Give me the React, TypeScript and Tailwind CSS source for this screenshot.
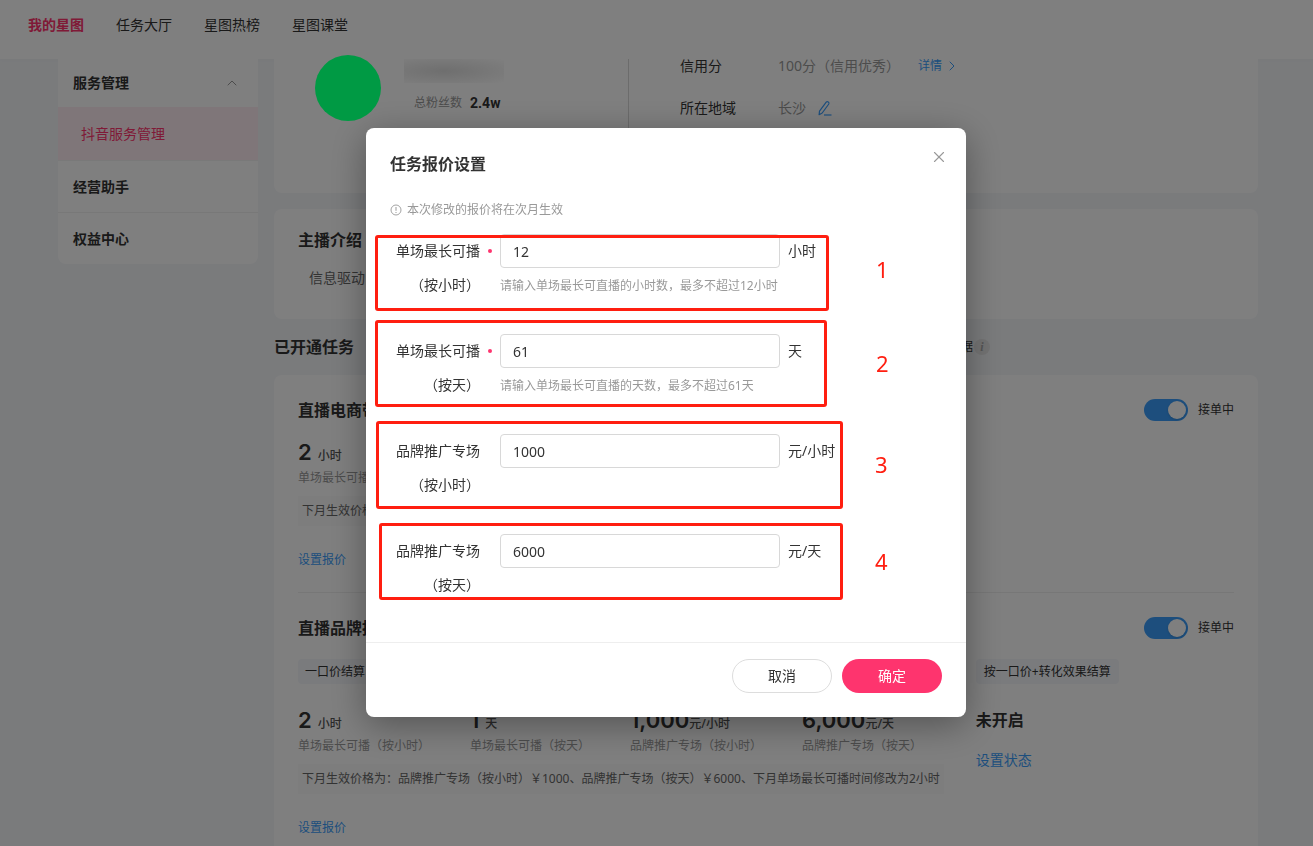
import React from 'react';
import { ChevronRight, ChevronUp, X } from 'lucide-react';

const navItems = ["我的星图", "任务大厅", "星图热榜", "星图课堂"];

const stats = [
  { value: "2", unit: "小时", label: "单场最长可播（按小时）", spaced: true },
  { value: "1", unit: "天", label: "单场最长可播（按天）", spaced: true },
  { value: "1,000", unit: "元/小时", label: "品牌推广专场（按小时）", spaced: false },
  { value: "6,000", unit: "元/天", label: "品牌推广专场（按天）", spaced: false },
];

const fields = [
  {
    id: "max-hours",
    label: "单场最长可播",
    sub: "（按小时）",
    required: true,
    value: "12",
    unit: "小时",
    hint: "请输入单场最长可直播的小时数，最多不超过12小时",
    mark: "-left-[15px] top-px w-[454px] h-[76px]",
    num: "left-[486px] top-[19px]",
  },
  {
    id: "max-days",
    label: "单场最长可播",
    sub: "（按天）",
    required: true,
    value: "61",
    unit: "天",
    hint: "请输入单场最长可直播的天数，最多不超过61天",
    mark: "-left-[15px] -top-[14px] w-[452px] h-[87px]",
    num: "left-[486px] top-[13px]",
  },
  {
    id: "price-hour",
    label: "品牌推广专场",
    sub: "（按小时）",
    required: false,
    value: "1000",
    unit: "元/小时",
    hint: "",
    mark: "-left-[14px] -top-[13px] w-[467px] h-[88px]",
    num: "left-[485px] top-[14px]",
  },
  {
    id: "price-day",
    label: "品牌推广专场",
    sub: "（按天）",
    required: false,
    value: "6000",
    unit: "元/天",
    hint: "",
    mark: "-left-[11px] -top-[11px] w-[464px] h-[77px]",
    num: "left-[485px] top-[11px]",
  },
];

function Stat({ value, unit, label, spaced }: { value: string; unit: string; label: string; spaced: boolean }) {
  return (
    <div>
      <div className={spaced ? "flex items-baseline gap-1.5 h-6 leading-6" : "flex items-baseline h-6 leading-6"}>
        <span className="font-[Inter] font-semibold text-[22px]">{value}</span>
        <span className="text-xs leading-6 font-medium text-[#555]">{unit}</span>
      </div>
      <p className="mt-1 text-xs leading-5 text-[#999]">{label}</p>
    </div>
  );
}

function Toggle({ id }: { id: string }) {
  return (
    <div className="flex items-center gap-2.5">
      <input
        id={id}
        type="checkbox"
        role="switch"
        defaultChecked
        className="relative appearance-none w-11 h-[22px] rounded-full bg-[#3a9dfa] before:absolute before:right-0.5 before:top-0.5 before:size-[18px] before:rounded-full before:bg-white before:shadow"
      />
      <label htmlFor={id} className="text-xs">接单中</label>
    </div>
  );
}

function Sidebar() {
  return (
    <aside className="w-[200px] shrink-0 self-start bg-white rounded-b-lg overflow-hidden text-sm">
      <div className="flex items-center justify-between h-12 pl-[15px] pr-[18px] font-bold">
        服务管理
        <ChevronUp className="w-4 h-4 text-[#999]" strokeWidth={1.5} />
      </div>
      <a href="#service" className="flex items-center h-[54px] pl-[23px] bg-[#ffedf2] text-[#fe346e] border-b border-[#f3f3f3]">抖音服务管理</a>
      <a href="#assistant" className="flex items-center h-[52px] pl-[15px] font-bold border-b border-[#f0f0f0]">经营助手</a>
      <a href="#rights" className="flex items-center h-[51px] pl-[15px] font-bold">权益中心</a>
    </aside>
  );
}

function Profile() {
  return (
    <section className="flex h-[134px] bg-white rounded-b-lg text-sm">
      <div className="flex w-[355px] border-r border-[#d8d8d8]">
        {/* avatar stays above the mask */}
        <div className="relative z-50 -mt-1 ml-[41px] size-[66px] rounded-full bg-[#009a44]" />
        <div className="ml-[23px]">
          <div className="w-[100px] h-6 bg-[radial-gradient(ellipse_at_40%_50%,#dedede_0%,#ededed_45%,#ffffff_100%)]" />
          <p className="flex items-center mt-2.5 ml-2.5 gap-2 text-xs text-[#999]">
            总粉丝数
            <span className="font-[Roboto] font-bold text-sm leading-5 text-[#333]">2.4w</span>
          </p>
        </div>
      </div>
      <dl className="grid grid-cols-[98px_auto] content-start ml-[51px] leading-[42px] -mt-3.5">
        <dt>信用分</dt>
        <dd className="flex items-center text-[#999]">
          100分（信用优秀）
          <a href="#detail" className="flex items-center gap-0.5 ml-[18px] text-xs leading-[42px] text-[#3a9dfa]">
            详情
            <ChevronRight className="w-4 h-4" strokeWidth={1.5} />
          </a>
        </dd>
        <dt>所在地域</dt>
        <dd className="flex items-center text-[#999]">
          长沙
          <button type="button" aria-label="编辑" className="ml-[11px] text-[#3a9dfa]">
            <svg className="w-4 h-4" viewBox="0 0 16 16" fill="none" stroke="currentColor" strokeWidth="1.2">
              <path d="M9.2 2.2a1.6 1.6 0 0 1 2.6 1.8L5.2 13l-3.1 1.7.4-3.6z" strokeLinejoin="round" />
              <path d="M7 15h7.5" />
            </svg>
          </button>
        </dd>
      </dl>
    </section>
  );
}

function Tasks() {
  return (
    <section className="bg-white rounded-t-lg px-6 pt-[23px] pb-12">
      <div className="pb-6 border-b border-[#efefef]">
        <div className="flex items-center justify-between h-6">
          <h3 className="text-base font-bold">直播电商带货</h3>
          <Toggle id="task-shop" />
        </div>
        <div className="flex mt-[18px]">
          <Stat {...stats[0]} label="单场最长可播" />
        </div>
        <p className="inline-block mt-2 px-1 bg-[#fafafa] text-xs leading-[30px] text-[#666]">下月生效价格为：</p>
        <div className="mt-[22px] leading-5">
          <a href="#quote-shop" className="text-xs text-[#3a9dfa]">设置报价</a>
        </div>
      </div>

      <div className="pt-[23px]">
        <div className="flex items-center justify-between h-6">
          <h3 className="text-base font-bold">直播品牌推广</h3>
          <Toggle id="task-brand" />
        </div>
        <div className="flex gap-8 mt-[18px]">
          <div>
            <span className="inline-block px-[7px] h-[25px] rounded bg-[#f5f7fb] text-xs leading-[25px]">一口价结算</span>
            <div className="flex gap-10 mt-6">
              {stats.map((stat) => (
                <Stat key={stat.label} {...stat} />
              ))}
            </div>
            <p className="mt-2 px-1 bg-[#fafafa] text-xs leading-[30px] text-[#666] whitespace-nowrap">
              下月生效价格为：品牌推广专场（按小时）￥1000、品牌推广专场（按天）￥6000、下月单场最长可播时间修改为2小时
            </p>
            <div className="mt-[22px] leading-5">
              <a href="#quote-brand" className="text-xs text-[#3a9dfa]">设置报价</a>
            </div>
          </div>
          <div>
            <span className="inline-block px-2 h-[25px] rounded bg-[#f5f7fb] text-xs leading-[25px] whitespace-nowrap">按一口价+转化效果结算</span>
            <p className="mt-6 text-base leading-6 font-bold">未开启</p>
            <a href="#status" className="block mt-[18px] text-sm leading-5 text-[#3a9dfa]">设置状态</a>
          </div>
        </div>
      </div>
    </section>
  );
}

function QuoteDialog() {
  return (
    <div className="fixed inset-0 z-40 flex items-start justify-center pt-32 pl-[19px] bg-black/50">
      <div role="dialog" aria-labelledby="quote-title" className="w-[600px] bg-white rounded-lg shadow-[0_8px_36px_rgba(0,0,0,0.35)]">
        <div className="px-6 pt-6 pb-2">
          <div className="flex items-start justify-between h-6">
            <h2 id="quote-title" className="text-base leading-6 font-bold">任务报价设置</h2>
            <button type="button" aria-label="关闭" className="-mr-1.5 -mt-1 text-[#999]">
              <X className="w-[18px] h-[18px]" strokeWidth={1.5} />
            </button>
          </div>
          <p className="flex items-center gap-[5px] mt-6 text-xs leading-5 text-[#999]">
            <svg className="w-3 h-3" viewBox="0 0 12 12" fill="none" stroke="currentColor">
              <circle cx="6" cy="6" r="5" strokeWidth="0.9" />
              <path d="M6 3v3.8M6 8v1" />
            </svg>
            本次修改的报价将在次月生效
          </p>

          <form className="mt-3.5 text-sm">
            {fields.map((field, i) => (
              <div key={field.id} className="relative flex h-[100px] leading-[34px]">
                <label htmlFor={field.id} className="w-[90px] text-right">
                  {field.label}
                  <br />
                  {field.sub}
                </label>
                <div className="flex justify-center w-5 h-[34px] items-center">
                  {field.required && <span className="size-1 rounded-full bg-[#fe346e]" />}
                </div>
                <div>
                  <input
                    id={field.id}
                    type="text"
                    defaultValue={field.value}
                    className="block w-[280px] h-[34px] px-3 border border-[#d8d8d8] rounded text-sm"
                  />
                  {field.hint && <p className="mt-2 text-xs leading-5 text-[#999]">{field.hint}</p>}
                </div>
                <span className="ml-2">{field.unit}</span>
                <div className={`absolute pointer-events-none border-3 border-[#ff1e10] rounded-[3px] ${field.mark}`} />
                <span className={`absolute text-[22px] leading-8 text-[#ff1e10] ${field.num}`}>{i + 1}</span>
              </div>
            ))}
          </form>
        </div>
        <div className="flex justify-end gap-2.5 px-6 pt-4 pb-6 border-t border-[#eee] text-sm">
          <button type="button" className="w-[100px] h-[34px] rounded-full border border-[#ddd]">取消</button>
          <button type="button" className="w-[100px] h-[34px] rounded-full bg-[#fe346e] text-white">确定</button>
        </div>
      </div>
    </div>
  );
}

export default function App() {
  return (
    <div className="h-screen overflow-hidden bg-[#f4f6f9] text-[#333] font-['Noto_Sans','Noto_Sans_CJK_SC',sans-serif]">
      <header className="h-[59px] bg-white shadow-[0_1px_4px_rgba(0,0,0,0.02)]">
        <nav className="flex gap-8 pl-7 text-sm leading-[50px]">
          {navItems.map((item, i) => (
            <a key={item} href="#nav" className={i === 0 ? "font-bold text-[#fe346e]" : ""}>{item}</a>
          ))}
        </nav>
      </header>

      <main className="flex gap-4 pl-[58px] pr-[55px]">
        <Sidebar />
        <div className="flex-1 min-w-0">
          <Profile />
          <section className="mt-4 h-[110px] bg-white rounded-lg px-6 pt-[19px]">
            <h3 className="text-base leading-6 font-bold">主播介绍</h3>
            <p className="mt-3.5 ml-[11px] text-sm leading-6 text-[#666]">信息驱动</p>
          </section>
          <div className="flex items-center justify-between h-14 pr-[268px]">
            <h2 className="text-base font-bold">已开通任务</h2>
            <div className="flex items-center text-xs">
              数据
              <span className="flex items-center justify-center ml-px size-4 rounded-full bg-[#e6e6e6] font-['Liberation_Serif'] font-bold italic text-[#aaa]">i</span>
            </div>
          </div>
          <Tasks />
        </div>
      </main>

      <QuoteDialog />
    </div>
  );
}
